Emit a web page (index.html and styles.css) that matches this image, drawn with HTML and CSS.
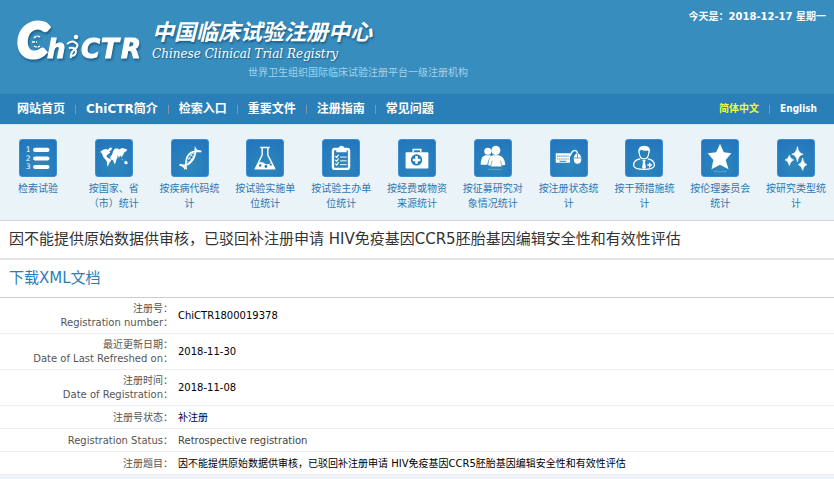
FILE: index.html
```html
<!DOCTYPE html>
<html lang="zh-CN">
<head>
    <meta charset="UTF-8">
    <meta name="viewport" content="width=device-width, initial-scale=1.0">
    <title>中国临床试验注册中心</title>
    <link rel="stylesheet" href="styles.css">
</head>
<body>

    <header class="header">
        <svg class="logo" width="128" height="50" viewBox="0 0 128 50" role="img" aria-label="ChiCTR">
            <g class="logo-text">
                <text class="logo-big" x="1" y="44">C</text>
                <text x="31" y="44">h</text>
                <text x="65" y="44">C</text>
                <text x="85" y="44">T</text>
                <text x="105" y="44">R</text>
            </g>
            <circle cx="60" cy="23" r="2.200" fill="#fff"/>
            <path d="M51 30Q56 26 59 28.500Q64 31 59 35Q54 39 55 44M53 34Q59 33 60 37Q60 41 56 42" fill="none" stroke="#fff" stroke-width="2"/>
            <path d="M18 24q3-3 6-1M16 28h5M18 32q3 2 6 0" fill="none" stroke="#fff" stroke-width="1.500" stroke-dasharray="3 1"/>
        </svg>
        <div class="brand">
            <h1>中国临床试验注册中心</h1>
            <p class="brand-en">Chinese Clinical Trial Registry</p>
            <p class="brand-note">世界卫生组织国际临床试验注册平台一级注册机构</p>
        </div>
        <p class="today">今天是：2018-12-17 星期一</p>
    </header>

    <nav class="nav">
        <ul class="menu">
            <li><a href="#">网站首页</a></li>
            <li><a href="#">ChiCTR简介</a></li>
            <li><a href="#">检索入口</a></li>
            <li><a href="#">重要文件</a></li>
            <li><a href="#">注册指南</a></li>
            <li><a href="#">常见问题</a></li>
        </ul>
        <ul class="menu lang">
            <li><a class="active" href="#">简体中文</a></li>
            <li><a href="#">English</a></li>
        </ul>
    </nav>

    <div class="stats">
        <a href="#">
            <svg class="icon" viewBox="0 0 38 38">
                <g class="num"><text x="6" y="13">1</text><text x="6" y="22">2</text><text x="6" y="31">3</text></g>
                <path d="M16 10.500h13M16 19.500h13M16 28.500h13" fill="none" stroke="#fff" stroke-width="4.400" stroke-linecap="round"/>
            </svg>
            检索试验
        </a>
        <a href="#">
            <svg class="icon" viewBox="0 0 38 38">
                <path d="M5 12l3-2 3-.5 1 1 3-2.500 2 .5-1 2.500-2 .5 1 2-3 2-1 2 1 1 3 1.500 1 2-2 2-1 3-1 1-.5-5-1.500-2.500-2-2-1.500-3.500-1-2-1 .5zM18 12l2-3 3 0 1 1 4-1.500 5 1.500-1 2-2 1-1 2-1 1.500-1 2-1-2-1 .5-.5 2-1.500-2.500-1 0 1 2-1.500 2-.5 3-1.500 2-1.500-4-2.500-1-.5-3 2-2zM30 23l1-1 2 1 .5 2-1 .5-2.500-.5zM27 20l2 1-1 .5z"/>
            </svg>
            按国家、省（市）统计
        </a>
        <a href="#">
            <svg class="icon" viewBox="0 0 38 38">
                <path d="M8 26q6 2 10-1 7-5 7-16M15 31q-1-8 1-13 3-6 9-6l6 0" fill="none" stroke="#fff" stroke-width="1.800"/>
                <path d="M18 15l6 3M20 13l4 2M16.500 19l6 2M16 23l4 1M22 13l-5 8M24 16l-6 8" fill="none" stroke="#fff" stroke-width=".8"/>
                <path d="M24 6l2 4 5 2-1 1-6-1zM7 26l4 1 3 1-.5 4-1.500-3z"/>
            </svg>
            按疾病代码统计
        </a>
        <a href="#">
            <svg class="icon" viewBox="0 0 38 38">
                <path d="M14 8h10M16 8v8L9 30h20L22 16V8" fill="none" stroke="#fff" stroke-width="1.500"/>
                <path d="M12 24q4-2 7 1 4 2 7-2l4 8H8z"/>
                <g fill="#267bb9"><circle cx="14" cy="27" r="1.300"/><circle cx="20" cy="28" r="1.500"/><circle cx="25" cy="26" r="1.200"/></g>
            </svg>
            按试验实施单位统计
        </a>
        <a href="#">
            <svg class="icon" viewBox="0 0 38 38">
                <rect x="10.500" y="9.500" width="17" height="21" rx="2" fill="none" stroke="#fff" stroke-width="2.500"/>
                <path d="M14 13V10q1-1 2-1 1-3 3.500-3T23 9q2 0 2 2v2z"/>
                <path d="M18 18h7M18 22h7M18 26h7" fill="none" stroke="#fff" stroke-width="1"/>
                <path d="M13 17l1.500 1.500 2-3M13 21l1.500 1.500 2-3M13 25l1.500 1.500 2-3" fill="none" stroke="#fff" stroke-width="1.300"/>
            </svg>
            按试验主办单位统计
        </a>
        <a href="#">
            <svg class="icon" viewBox="0 0 38 38">
                <path d="M15 13v-3h8v3" fill="none" stroke="#fff" stroke-width="1.500"/>
                <rect x="7" y="13" width="24" height="17" rx="1"/>
                <circle cx="18.500" cy="21" r="6" fill="#267bb9"/>
                <path d="M18.500 17v8M14.500 21h8" fill="none" stroke="#fff" stroke-width="2.600"/>
            </svg>
            按经费或物资来源统计
        </a>
        <a href="#">
            <svg class="icon" viewBox="0 0 38 38">
                <circle cx="13.500" cy="12" r="3.700"/>
                <path d="M6 26q0-9 5-10h5q1 0 1 1-3 3-4 9z"/>
                <circle cx="22" cy="11" r="4.800"/>
                <path d="M14 27q0-10 5-11h6q6 1 7 10l-4 1v1H17v-1z"/>
                <path d="M17 27l1-5M28 27l-1-5" stroke="#267bb9" stroke-width=".6"/>
                <path d="M14 31h14" stroke="#fff" stroke-width="1" opacity=".25"/>
            </svg>
            按征募研究对象情况统计
        </a>
        <a href="#">
            <svg class="icon" viewBox="0 0 38 38">
                <rect x="5" y="14" width="15" height="10"/>
                <path d="M6.500 17h12M6.500 20h12" fill="none" stroke="#267bb9" stroke-width="1.200" stroke-dasharray="1.200 1"/>
                <path d="M9 22.500h7" stroke="#267bb9" stroke-width="1"/>
                <path d="M20 17q2-6 5-6 3 0 3 4" fill="none" stroke="#fff" stroke-width="1.500"/>
                <path d="M28 14q4 1 4 6 0 5-4 5t-4-5q0-5 4-6z"/>
                <path d="M24 19h8M28 14v5" stroke="#267bb9" stroke-width=".7"/>
            </svg>
            按注册状态统计
        </a>
        <a href="#">
            <svg class="icon" viewBox="0 0 38 38">
                <path d="M14 13q0 7 5 7t5-7" fill="none" stroke="#fff" stroke-width="1.300"/>
                <path d="M13 14q-1-8 6-8 8 0 6 8l-2-3q-4 1-7-1z"/>
                <path d="M15 20q-7 1-7 7 1 4 11 4t11-4q0-6-7-7" fill="none" stroke="#fff" stroke-width="1.300"/>
                <path d="M17 21h4l-1 2 1 6-2 2-2-2 1-6z"/>
                <path d="M25 24v5M22.500 26.500h5" stroke="#fff" stroke-width="1.600"/>
            </svg>
            按干预措施统计
        </a>
        <a href="#">
            <svg class="icon" viewBox="0 0 38 38">
                <path d="M19 4l4 9 8 1-6 7 3 10-9-5-9 5 2-10-6-7 9-1z"/>
                <path d="M11 32l8 1 8-1-2 2H14z" opacity=".2"/>
            </svg>
            按伦理委员会统计
        </a>
        <a href="#">
            <svg class="icon" viewBox="0 0 38 38">
                <path d="M20.500 7q1 7 6 8-5 1-6 8-1-7-6-8 5-1 6-8zM12 16q1 4 4.500 5-3.500 1-4.500 6-1-5-4.500-6 3.500-1 4.500-5zM26 19q1 6 4.500 7-3.500 1-4.500 6-1-5-4.500-6 3.500-1 4.500-7z" stroke="#fff" stroke-width=".7"/>
            </svg>
            按研究类型统计
        </a>
    </div>

    <main>
        <h2 class="title">因不能提供原始数据供审核，已驳回补注册申请 HIV免疫基因CCR5胚胎基因编辑安全性和有效性评估</h2>
        <p class="download"><a href="#">下载XML文档</a></p>

        <table class="detail">
            <tr>
                <th scope="row">注册号：<br>Registration number：</th>
                <td>ChiCTR1800019378</td>
            </tr>
            <tr>
                <th scope="row">最近更新日期：<br>Date of Last Refreshed on：</th>
                <td>2018-11-30</td>
            </tr>
            <tr>
                <th scope="row">注册时间：<br>Date of Registration：</th>
                <td>2018-11-08</td>
            </tr>
            <tr>
                <th scope="row">注册号状态：</th>
                <td class="status">补注册</td>
            </tr>
            <tr>
                <th scope="row">Registration Status：</th>
                <td class="en">Retrospective registration</td>
            </tr>
            <tr>
                <th scope="row">注册题目：</th>
                <td>因不能提供原始数据供审核，已驳回补注册申请 HIV免疫基因CCR5胚胎基因编辑安全性和有效性评估</td>
            </tr>
        </table>
    </main>

</body>
</html>
```
FILE: styles.css
```css
* {
    box-sizing: border-box;
}
body {
    margin: 0;
    background: #f0f4fa;
    font-family: "DejaVu Sans", "Noto Sans CJK SC", sans-serif;
    font-size: 10px;
    line-height: 14px;
    color: #000;
}
h1, h2, p, ul {
    margin: 0;
    padding: 0;
    font-weight: normal;
}
a {
    text-decoration: none;
}

/* header */
.header {
    display: flex;
    align-items: flex-start;
    height: 94px;
    padding: 10px 8px 0 16px;
    background: #378dbd;
    color: #fff;
}
.logo {
    flex: none;
    margin-top: 4px;
    overflow: visible;
    filter: drop-shadow(1px 2px 1px rgba(0, 50, 90, 0.5));
}
.logo-text {
    font-family: "DejaVu Sans", sans-serif;
    font-size: 26px;
    font-style: italic;
    font-weight: bold;
    fill: #fff;
    stroke: #fff;
    stroke-width: 1px;
}
.logo-big {
    font-family: Lato, sans-serif;
    font-size: 50px;
    font-weight: 900;
    stroke-width: 3px;
}
.brand {
    flex: 1;
    margin-left: 8px;
    padding-top: 9px;
}
.brand h1 {
    font-size: 22px;
    font-style: italic;
    font-weight: bold;
    line-height: 28px;
    text-shadow: 1px 2px 2px rgba(0, 50, 90, 0.5);
}
.brand-en {
    font-family: "DejaVu Serif", serif;
    font-size: 12px;
    font-style: italic;
    text-shadow: 1px 1px 1px rgba(0, 50, 90, 0.5);
}
.brand-note {
    margin: 5px 0 0 96px;
    color: #a3d2ea;
}
.today {
    font-family: "DejaVu Sans", "Noto Sans CJK SC", sans-serif;
    font-weight: bold;
}

/* navigation */
.nav {
    display: flex;
    justify-content: space-between;
    align-items: center;
    height: 30px;
    padding: 0 17px;
    background: #2a7fb8;
}
.menu {
    display: flex;
    align-items: center;
    list-style: none;
    font-size: 12px;
    font-weight: bold;
}
.menu li {
    display: flex;
    align-items: center;
}
.menu li + li::before {
    content: "";
    width: 1px;
    height: 9px;
    margin: 0 10px;
    background: #7d98a6;
}
.menu a {
    color: #fff;
}
.lang {
    font-family: "DejaVu Sans Condensed", "DejaVu Sans", "Noto Sans CJK SC", sans-serif;
    font-size: 10px;
}
.lang .active {
    color: #f5f53c;
}

/* statistics links */
.stats {
    display: grid;
    grid-template-columns: repeat(11, 1fr);
    padding: 14px 0 9px;
    background: #eaf3f8;
    border-top: 1px solid #d8ebf8;
    border-bottom: 1px solid #cdd5db;
}
.stats a {
    padding: 0 6px;
    color: #2a78b4;
    line-height: 15px;
    text-align: center;
}
.icon {
    display: block;
    width: 38px;
    height: 38px;
    margin: 0 auto 4px;
    border: 1px solid #3b8fd0;
    border-radius: 3px;
    background: radial-gradient(circle at 50% 70%, #2f88bb, #2074be);
    fill: #fff;
}
.num {
    font-size: 8px;
}

/* record */
main {
    background: #fff;
}
.title {
    padding: 0 9px;
    border-bottom: 2px solid #e6e6e6;
    font-size: 15px;
    line-height: 37px;
    color: #333;
}
.download {
    padding: 0 9px;
    border-bottom: 1px solid #ccc;
    font-size: 15px;
    line-height: 37px;
}
.download a {
    color: #2a7fb8;
}
.detail {
    width: 100%;
    border-spacing: 0;
}
.detail th, .detail td {
    height: 23px;
    padding: 4px 5px 3px;
    border-bottom: 1px solid #eee;
    text-align: left;
    vertical-align: middle;
}
.detail th {
    width: 173px;
    padding-left: 0;
    padding-right: 0;
    font-weight: normal;
    text-align: right;
    color: #555;
}
.detail .status {
    color: #000050;
}
.detail .en {
    color: #444;
}
```
